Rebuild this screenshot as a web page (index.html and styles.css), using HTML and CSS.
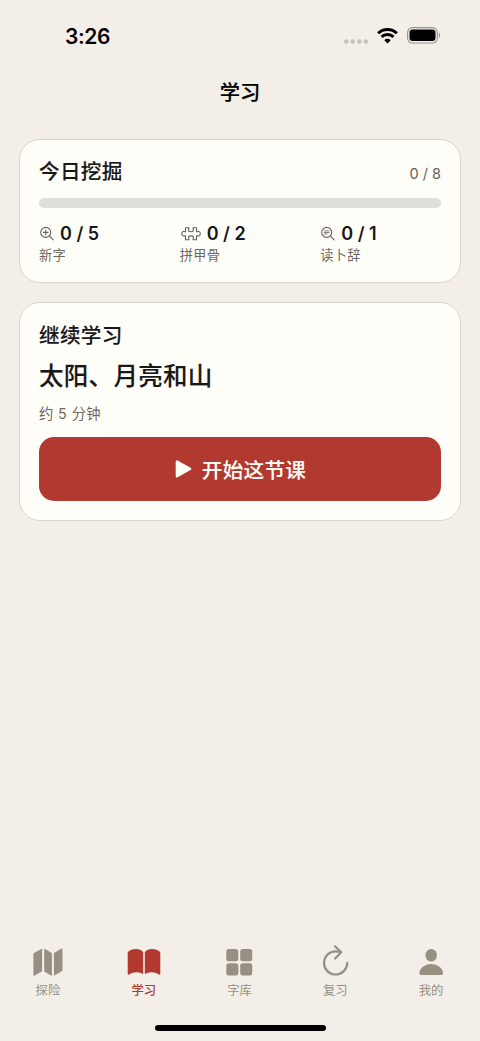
FILE: index.html
```html
<!DOCTYPE html>
<html lang="zh-CN">
<head>
<meta charset="utf-8">
<title>学习</title>
<link rel="stylesheet" href="styles.css">
</head>
<body>
<div class="screen">
  <header class="status">
    <span class="time">3:26</span>
    <div class="indicators">
      <svg class="signal" width="24" height="5" viewBox="0 0 24 5" fill="#c5c0ba"><circle cx="2.300" cy="2.500" r="2.200"/><circle cx="8.800" cy="2.500" r="2.200"/><circle cx="15.300" cy="2.500" r="2.200"/><circle cx="21.800" cy="2.500" r="2.200"/></svg>
      <svg class="wifi" width="21" height="16" viewBox="0 0 21 16">
        <g fill="none" stroke="#000" stroke-width="2.9">
          <path d="M1.1 5.3a13.4 13.4 0 0 1 18.8 0"/>
          <path d="M4.5 8.900a8.600 8.600 0 0 1 12 0"/>
        </g>
        <path d="M10.5 15.600 7.300 12.200a4.500 4.500 0 0 1 6.400 0z"/>
      </svg>
      <svg class="battery" width="34" height="17" viewBox="0 0 34 17">
        <rect x=".6" y=".6" width="29.800" height="15.400" rx="5" fill="none" stroke="#96928a" stroke-width="1.1"/>
        <rect x="2.500" y="2.500" width="26" height="11.500" rx="3.200"/>
        <path d="M31.9 5.800v5c1.7-.7 1.7-4.300 0-5z" fill="#96928a"/>
      </svg>
    </div>
  </header>
  <h1 class="page-title">学习</h1>

  <main class="cards">
    <section class="card daily">
      <div class="card-head">
        <h2>今日挖掘</h2>
        <span class="total">0 / 8</span>
      </div>
      <div class="track"></div>
      <div class="stats">
        <div class="stat">
          <div class="count">
            <svg width="15" height="16" viewBox="0 0 15 16" fill="none" stroke="#65615c" stroke-width="1.1" stroke-linecap="round">
              <circle cx="6.7" cy="6.4" r="5"/><path d="m10.500 10.200 3.700 3.700M6.700 4.100v4.600M4.400 6.400h4.600"/>
            </svg>
            <span>0 / 5</span>
          </div>
          <p>新字</p>
        </div>
        <div class="stat">
          <div class="count">
            <svg width="21" height="16" viewBox="0 0 21 16" fill="none" stroke="#65615c" stroke-width="1.1" stroke-linejoin="round">
              <path d="M5.500 1.800H8.900V3.300C7.900 4 8.300 5.700 11 5.700S14.100 4 13.100 3.300V1.800H16.500V5.800H17.300C18.200 5 20.300 5.500 20.300 7.700S18.200 10.400 17.300 9.700H16.500V13.800H13.100V12.400C14.100 11.700 13.700 9.900 11 9.900S7.900 11.700 8.900 12.400V13.800H5.500V9.700H4.700C3.800 10.400 1.700 9.900 1.700 7.700S3.800 5 4.700 5.800H5.500Z"/>
            </svg>
            <span>0 / 2</span>
          </div>
          <p>拼甲骨</p>
        </div>
        <div class="stat">
          <div class="count">
            <svg width="15" height="16" viewBox="0 0 15 16" fill="none" stroke="#65615c" stroke-width="1.1" stroke-linecap="round">
              <circle cx="6.700" cy="6.400" r="5"/><path d="m10.500 10.200 3.700 3.700"/><path stroke-width=".8" d="M4.300 4.900h4.800M4.300 6.500h4.800M4.300 8.100h2.700"/>
            </svg>
            <span>0 / 1</span>
          </div>
          <p>读卜辞</p>
        </div>
      </div>
    </section>

    <section class="card lesson">
      <h2>继续学习</h2>
      <h3>太阳、月亮和山</h3>
      <p class="duration">约 5 分钟</p>
      <button class="start">
        <svg width="17" height="18" viewBox="0 0 17 18" fill="#fffef8"><path d="M.7 1.700C.7.600 1.600.1 2.600.6l13 7.200c1 .5 1 1.700 0 2.300l-13 7.200c-1 .5-1.900 0-1.900-1.100z"/></svg>
        <span>开始这节课</span>
      </button>
    </section>
  </main>

  <nav class="tabs">
    <a class="tab">
      <svg width="34" height="34" viewBox="0 0 34 34"><path d="M2.700 8.200 11.100 3.500v22.700L3.800 30.500c-1 .5-1.400.1-1.400-.9V8.900q0-.5.3-.7zM13.200 3.600l7.200 4.200q.5.300.5.900v22.300l-7.200-4.200q-.5-.3-.5-.9zM22.900 7.900 30.200 3.700c.9-.5 1.300-.1 1.300.8v20.600q0 .8-.6 1.200L22.900 30.700z"/></svg>
      <span>探险</span>
    </a>
    <a class="tab active">
      <svg width="34" height="34" viewBox="0 0 34 34"><path d="M.7 8.200q0-1.100.8-1.700c4.500-3.200 10.200-3.200 14.200-.1q.5.400.5 1.100v21.700c-4.300-2.500-9.700-2.500-14.100.4-.8.400-1.400.1-1.400-.9zM17.800 7.500q0-.7.500-1.100c4-3.100 9.700-3.100 14.200.1q.8.600.8 1.700v20.500c0 1-.6 1.300-1.400.9-4.400-2.900-9.800-2.900-14.100-.4z"/></svg>
      <span>学习</span>
    </a>
    <a class="tab">
      <svg width="34" height="34" viewBox="0 0 34 34"><rect x="4.300" y="4.100" width="12" height="12.200" rx="2.500"/><rect x="18.200" y="4.100" width="12" height="12.200" rx="2.500"/><rect x="4.300" y="18.200" width="12" height="12.200" rx="2.500"/><rect x="18.200" y="18.200" width="12" height="12.200" rx="2.500"/></svg>
      <span>字库</span>
    </a>
    <a class="tab">
      <svg width="34" height="34" viewBox="0 0 34 34"><g fill="none" stroke="#969083" stroke-width="2.200" stroke-linecap="round" stroke-linejoin="round"><path d="M22.200 6.800Q19.800 6.300 17.600 6.300A11.600 11.600 0 1 0 29.200 17.900"/><path d="m16.900 1.300 6.300 5.900-6.100 6.300"/></g></svg>
      <span>复习</span>
    </a>
    <a class="tab">
      <svg width="34" height="34" viewBox="0 0 34 34"><ellipse cx="17.200" cy="10.200" rx="5.700" ry="6.300"/><path d="M5.400 27.400C5.800 23.400 10.700 18.900 17.200 18.900s11.400 4.500 11.800 8.500q.1 2.700-2.500 2.700H7.900q-2.600 0-2.500-2.700z"/></svg>
      <span>我的</span>
    </a>
  </nav>
  <div class="home-bar"></div>
</div>
</body>
</html>
```
FILE: styles.css
```css
* { box-sizing: border-box; margin: 0; padding: 0; }
body { background: #f3eee7; }
.screen {
  display: flex;
  flex-direction: column;
  width: 480px;
  height: 1041px;
  color: #181818;
  font-family: Inter, "Noto Sans CJK SC", sans-serif;
}
.status {
  display: flex;
  justify-content: space-between;
  align-items: center;
  height: 72px;
  padding: 0 39px 0 65px;
  color: #000;
}
.time { padding-top: 1px; font-size: 21px; font-weight: 600; line-height: 24px; letter-spacing: -.4px; }
.indicators { display: flex; align-items: center; }
.signal { margin: 10px 9px 0 0; }
.wifi { margin: 0 9px 1px 0; }
.battery { margin-bottom: 1px; }
.page-title {
  height: 67px;
  padding-top: 1px;
  color: #000;
  font-size: 20.300px;
  font-weight: 500;
  line-height: 40px;
  text-align: center;
  -webkit-text-stroke: .2px;
}
.cards { display: flex; flex-direction: column; gap: 19px; padding: 0 19px; }
.card {
  padding: 17px 19px 0;
  border: 1px solid #ddd5c9;
  border-radius: 21px;
  background: #fffef8;
}
.daily { height: 144px; }
.lesson { height: 219px; }
.card-head { display: flex; justify-content: space-between; height: 30px; }
h2 { font-size: 20.600px; font-weight: 500; line-height: 30px; letter-spacing: .3px; -webkit-text-stroke: .1px; }
.lesson h2 { padding-top: 1px; }
.total { color: #65615c; font-size: 14.500px; line-height: 33px; }
.track { height: 10px; margin-top: 11px; border-radius: 5px; background: #e0ded9; }
.stats { display: grid; grid-template-columns: repeat(3, 1fr); margin-top: 14px; gap: 20px; }
.count { display: flex; align-items: center; gap: 6px; height: 23px; font-size: 18px; font-weight: 600; }
.stat p { padding-top: 1px; color: #6c6964; font-size: 13.200px; line-height: 18px; letter-spacing: .3px; }
h3 { margin-top: 5px; font-size: 24.500px; font-weight: 500; line-height: 40px; letter-spacing: .3px; -webkit-text-stroke: .1px; }
.duration { margin-top: 8px; color: #6c6964; font-size: 14.300px; line-height: 20px; letter-spacing: .4px; }
.start {
  display: flex;
  justify-content: center;
  align-items: center;
  gap: 10px;
  width: 100%;
  height: 64px;
  margin-top: 13px;
  padding-left: 1px;
  border: 0;
  border-radius: 15px;
  background: #b1392f;
  color: #fffef8;
  font-family: inherit;
  font-size: 20.600px;
  font-weight: 500;
  letter-spacing: .3px;
  -webkit-text-stroke: .1px;
}
.tabs { display: grid; grid-template-columns: repeat(5, 1fr); margin: auto 1px 0 0; height: 80px; }
.tab { display: flex; flex-direction: column; align-items: center; color: #969083; fill: currentColor; }
.tab span { margin-top: 3px; font-size: 12.300px; line-height: 18px; }
.active { color: #b1392f; }
.active span { font-weight: 500; }
.home-bar { flex: none; width: 171px; height: 6px; margin: 0 auto 10px; border-radius: 3px; background: #000; }
```
